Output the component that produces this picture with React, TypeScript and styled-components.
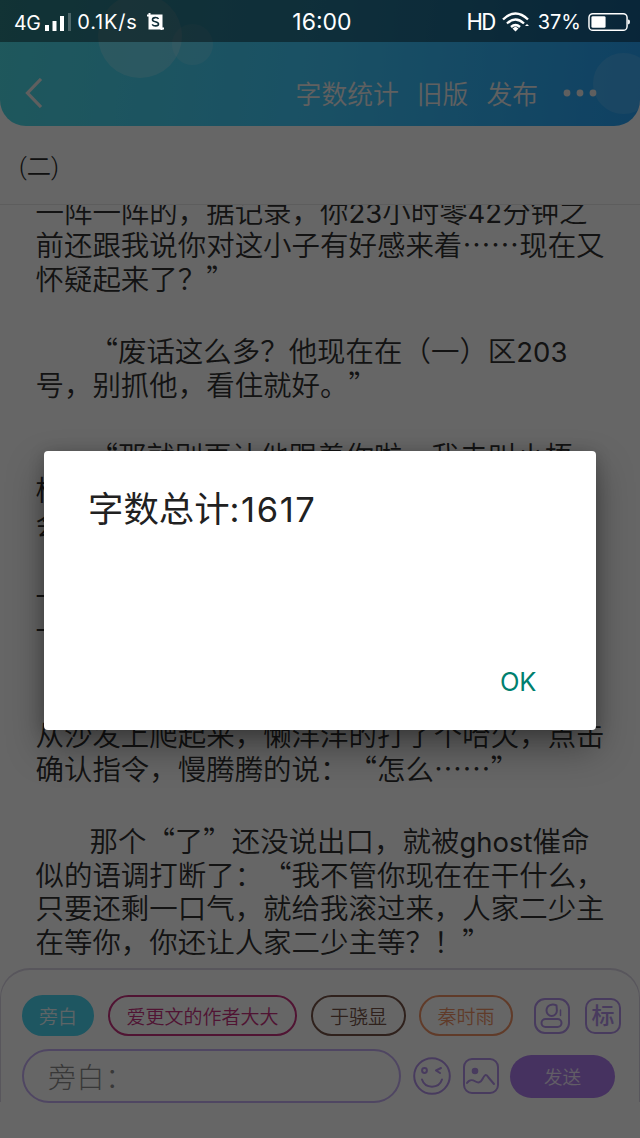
import React from 'react';
import styled, { createGlobalStyle } from 'styled-components';

const cjk = '"Noto Sans CJK SC", sans-serif';
const latin = 'Inter, "Noto Sans CJK SC", sans-serif';

const GlobalStyle = createGlobalStyle`
  * { box-sizing: border-box; }
  body { margin: 0; background: #fff; font-family: ${cjk}; }
`;

const Screen = styled.div`
  position: relative;
  width: 640px;
  height: 1138px;
  overflow: hidden;
  background: #fff;
  display: flex;
  flex-direction: column;
`;

const Header = styled.header`
  position: relative;
  height: 126px;
  flex: none;
  padding: 59px 43px 0 25px;
  display: flex;
  align-items: center;
  overflow: hidden;
  border-radius: 0 0 26px 26px;
  background: linear-gradient(97deg, #4edbe6 0%, #41c9fb 50%, #27a2f6 100%);
`;

const Bubble = styled.i<{ $x: number; $y: number; $size: number; $alpha: number }>`
  position: absolute;
  left: ${p => p.$x}px;
  top: ${p => p.$y}px;
  width: ${p => p.$size}px;
  height: ${p => p.$size}px;
  border-radius: 50%;
  background: rgba(255, 255, 255, ${p => p.$alpha});
`;

const StatusShade = styled.div`
  position: absolute;
  inset: 0 0 auto;
  height: 42px;
  background: rgba(0, 0, 0, 0.42);
`;

const Actions = styled.nav`
  position: relative;
  margin-left: auto;
  display: flex;
  align-items: center;
  gap: 18px;
  color: #f0f0f0;
  font-size: 25.8px;
  font-weight: 350;
  white-space: nowrap;
`;

const Dots = styled.svg`
  margin-left: 7px;
`;

const Chapter = styled.div`
  height: 79px;
  flex: none;
  padding: 0 0 2px 19px;
  display: flex;
  align-items: center;
  font-size: 24.3px;
  font-weight: 350;
  font-family: Roboto, ${cjk};
  color: #2a2a2a;
  border-bottom: 1px solid #e8e8e8;
`;

const Story = styled.main`
  height: 763px;
  flex: none;
  overflow: hidden;
  padding-left: 35.500px;
  font-size: 28.46px;
  font-weight: 350;
  line-height: 33.8px;
  text-spacing-trim: space-all;
  color: #303030;
`;

const Paragraph = styled.p`
  margin: 0 0 38px;
  white-space: nowrap;
  &:first-child { margin-top: -11.500px; }
`;

const Line = styled.div<{ $indent?: boolean }>`
  height: 33.8px;
  padding-left: ${p => (p.$indent ? 54 : 0)}px;
`;

const Latin = styled.span<{ $size: number; $spacing?: number }>`
  font-family: ${latin};
  font-size: ${p => p.$size}px;
  font-weight: 400;
  line-height: 0;
  letter-spacing: ${p => p.$spacing ?? 0}px;
`;

const Composer = styled.footer`
  height: 134px;
  flex: none;
  padding: 25px 18px 0 21px;
  border: 1px solid #dcd6e6;
  border-width: 2px 1px 0;
  border-radius: 30px 30px 0 0;
`;

const Row = styled.div`
  display: flex;
  align-items: center;
`;

const Chip = styled.button<{ $color: string; $width: number; $gap?: number; $filled?: boolean }>`
  width: ${p => p.$width}px;
  height: 41px;
  flex: none;
  padding: 0;
  margin-right: ${p => p.$gap ?? 14}px;
  border: 2px solid ${p => p.$color};
  border-radius: 21px;
  background: ${p => (p.$filled ? p.$color : 'transparent')};
  color: ${p => (p.$filled ? '#e8fbff' : p.$color)};
  font: 350 19px/1 ${cjk};
  white-space: nowrap;
`;

const InputRow = styled(Row)`
  margin-top: 13px;
`;

const Field = styled.div`
  width: 379px;
  height: 54px;
  flex: none;
  border: 2px solid #c6aef5;
  border-radius: 27px;
  padding-left: 24px;
  display: flex;
  align-items: center;
  font-size: 28px;
  font-weight: 300;
  color: #8c8c8c;
  letter-spacing: 0.6px;
`;

const Icon = styled.svg<{ $gap: number }>`
  flex: none;
  margin-left: ${p => p.$gap}px;
  fill: none;
  stroke: #b493ec;
  stroke-width: 2;
  stroke-linecap: round;
  stroke-linejoin: round;
`;

const TagIcon = styled.div`
  width: 36px;
  height: 36px;
  flex: none;
  margin-left: 15px;
  border: 2px solid #b493ec;
  border-radius: 10px;
  display: grid;
  place-items: center;
  padding-bottom: 2px;
  color: #b493ec;
  font-size: 23px;
  font-weight: 500;
  line-height: 1;
`;

const Send = styled.button`
  width: 105px;
  height: 43px;
  flex: none;
  margin-left: 11px;
  padding: 0;
  border: 0;
  border-radius: 22px;
  background: #ae7df0;
  color: #f4e8ff;
  font: 350 18.6px/1 ${cjk};
`;

const Scrim = styled.div`
  position: absolute;
  inset: 0;
  background: rgba(0, 0, 0, 0.6);
  padding: 451px 0 0 44px;
`;

const Dialog = styled.section`
  width: 552px;
  height: 279px;
  padding: 31px 60px 27px 44px;
  border-radius: 4px;
  background: #fff;
  box-shadow: 0 18px 36px rgba(0, 0, 0, 0.36), 0 2px 16px rgba(0, 0, 0, 0.2);
  display: flex;
  flex-direction: column;
  justify-content: space-between;
`;

const Title = styled.h1`
  margin: 0;
  font: 400 35.4px/50px ${cjk};
  color: #212121;
`;

const Ok = styled.button`
  align-self: flex-end;
  border: 0;
  padding: 0;
  background: none;
  color: #00806f;
  font: 400 25.5px/42px ${latin};
  letter-spacing: -0.3px;
`;

const StatusBar = styled.div`
  position: absolute;
  inset: 0 0 auto;
  height: 44px;
  padding: 0 10px 0 14px;
  display: grid;
  grid-template-columns: 1fr auto 1fr;
  align-items: center;
  color: #fff;
  font: 400 20px/1 Inter, sans-serif;
`;

const StatusGroup = styled.div<{ $end?: boolean }>`
  display: flex;
  align-items: center;
  justify-content: ${p => (p.$end ? 'flex-end' : 'flex-start')};
  white-space: nowrap;
`;

const StatusText = styled.span<{ $size?: number; $spacing?: number; $left?: number; $top?: number }>`
  font-size: ${p => p.$size ?? 20}px;
  letter-spacing: ${p => p.$spacing ?? 0}px;
  margin-left: ${p => p.$left ?? 0}px;
  padding-top: ${p => p.$top ?? 0}px;
`;

const Radio = styled(StatusText)`
  font-family: Roboto, sans-serif;
`;

const Glyph = styled.svg<{ $left: number }>`
  flex: none;
  margin-left: ${p => p.$left}px;
`;

const story: { indent?: boolean; lines: string[] }[] = [
  { lines: ['一阵一阵的，据记录，你23小时零42分钟之', '前还跟我说你对这小子有好感来着……现在又', '怀疑起来了？”'] },
  { indent: true, lines: ['“废话这么多？他现在在（一）区203', '号，别抓他，看住就好。”'] },
  { indent: true, lines: ['“那就别再让他跟着你啦，我去叫小梧', '桐过来陪你，顺便让他给你带个好玩的一个', '会动的。”'] },
  { lines: ['一', '一'] },
  { indent: true, lines: ['', '从沙发上爬起来，懒洋洋的打了个哈欠，点击', '确认指令，慢腾腾的说：“怎么……”'] },
  { indent: true, lines: ['那个“了”还没说出口，就被ghost催命', '似的语调打断了：“我不管你现在在干什么，', '只要还剩一口气，就给我滚过来，人家二少主', '在等你，你还让人家二少主等？！”'] },
];

const renderLine = (text: string) =>
  text.split(/([a-z0-9]+)/).map((part, i) => (i % 2 ? <Latin key={i} $size={27.5}>{part}</Latin> : part));

export default function App() {
  return (
    <Screen lang="zh-CN">
      <GlobalStyle />
      <Header>
        <Bubble $x={98} $y={-6} $size={84} $alpha={0.2} />
        <Bubble $x={172} $y={24} $size={41} $alpha={0.13} />
        <Bubble $x={593} $y={53} $size={61} $alpha={0.12} />
        <StatusShade />
        <svg width="18" height="30" viewBox="0 0 18 30" fill="none" stroke="#eee" strokeWidth="3.2">
          <path d="M16 1 2.500 15 16 29" />
        </svg>
        <Actions>
          <span>字数统计</span>
          <span>旧版</span>
          <span>发布</span>
          <Dots width="34" height="8" viewBox="0 0 34 8" fill="#eee">
            <circle cx="4" cy="4" r="3.4" />
            <circle cx="17" cy="4" r="3.4" />
            <circle cx="30" cy="4" r="3.4" />
          </Dots>
        </Actions>
      </Header>
      <Chapter>(二)</Chapter>
      <Story>
        {story.map((p, i) => (
          <Paragraph key={i}>
            {p.lines.map((line, j) => (
              <Line key={j} $indent={p.indent && j === 0}>{renderLine(line)}</Line>
            ))}
          </Paragraph>
        ))}
      </Story>
      <Composer>
        <Row>
          <Chip $color="#4cd6f2" $width={72} $filled>旁白</Chip>
          <Chip $color="#c8327f" $width={189}>爱更文的作者大大</Chip>
          <Chip $color="#755347" $width={95} $gap={13}>于骁显</Chip>
          <Chip $color="#f09468" $width={94} $gap={0}>秦时雨</Chip>
          <Icon $gap={21} width="36" height="36" viewBox="0 0 36 36">
            <rect x="1" y="1" width="34" height="34" rx="10" />
            <path d="M22.500 7.500c-4-2-10-.5-10 5 0 3 2.300 5.500 5.200 5.500s5.200-2.500 5.200-5.500z" />
            <rect x="7.500" y="21" width="20" height="8" rx="4" />
            <path d="M26.500 12v5.500" strokeWidth="1.500" />
          </Icon>
          <TagIcon>标</TagIcon>
        </Row>
        <InputRow>
          <Field>旁白：</Field>
          <Icon $gap={12} width="38" height="38" viewBox="0 0 38 38">
            <circle cx="19" cy="19" r="17.8" />
            <circle cx="11.500" cy="13.500" r="2.400" />
            <path d="m28 11-5 2.500 4 2.500M9 22.500c3 9.500 17 9.500 20 0" />
          </Icon>
          <Icon $gap={12} width="36" height="36" viewBox="0 0 36 36">
            <rect x="1" y="1" width="34" height="34" rx="8" />
            <circle cx="12" cy="13" r="2.300" fill="#b493ec" />
            <path d="M4 25c3-4.500 6-3 8.500-1.500s5 1.500 7-2.500 3.500-6 6-1.500l5.500 6.500" />
          </Icon>
          <Send>发送</Send>
        </InputRow>
      </Composer>
      <Scrim>
        <Dialog>
          <Title>字数总计<Latin $size={34.5} $spacing={1.6}>:1617</Latin></Title>
          <Ok>OK</Ok>
        </Dialog>
      </Scrim>
      <StatusBar>
        <StatusGroup>
          <StatusText $size={19.5} $top={3} $spacing={-0.4}>4G</StatusText>
          <Glyph $left={4} width="30" height="20" viewBox="0 0 30 20" fill="#fff">
            <path d="M1 13h4v6H1zM8.500 9h4v10h-4zM16 4h4v15h-4z" />
            <path d="M24 1h3v18h-3z" opacity=".25" />
          </Glyph>
          <StatusText $left={3} $spacing={0.8}>0.1K/s</StatusText>
          <Glyph $left={8} width="19" height="19" viewBox="0 0 19 19">
            <path d="M1 2.500h14.500V17M3.500 0v15.500H18" fill="none" stroke="#fff" strokeWidth="2" />
            <path d="M3.500 2.500h12v13h-12z" fill="#fff" />
            <path d="M12.500 6c-1-2-6-2-6 .7 0 2.600 6 1.400 6 4.200 0 2.600-5 2.600-6.300.4" fill="none" stroke="#102e38" strokeWidth="1.600" />
          </Glyph>
        </StatusGroup>
        <StatusText $size={23} $top={1}>16:00</StatusText>
        <StatusGroup $end>
          <Radio $size={23} $spacing={-1.6}>HD</Radio>
          <Glyph $left={7} width="28" height="20" viewBox="0 0 28 20" fill="none" stroke="#fff" strokeWidth="2.400">
            <path d="M1 7.500Q13.500-4.500 26 7.500M5 11.500q8.500-8 17 0M9 15q4.500-4 9 0" />
            <path d="m10.500 16.500 3-2 3 2-3 3zM23 14l2-2 2 2z" fill="#fff" stroke="none" />
          </Glyph>
          <StatusText $left={8}>37%</StatusText>
          <Glyph $left={7} width="42" height="20" viewBox="0 0 43 20">
            <rect x="1" y="1.500" width="39" height="17" rx="4" fill="none" stroke="#fff" strokeWidth="1.500" />
            <rect x="3.500" y="4" width="14.500" height="12" rx="1.500" fill="#fff" />
            <path d="M41 7.500q2 0 2 2.500t-2 2.500z" fill="#fff" />
          </Glyph>
        </StatusGroup>
      </StatusBar>
    </Screen>
  );
}
